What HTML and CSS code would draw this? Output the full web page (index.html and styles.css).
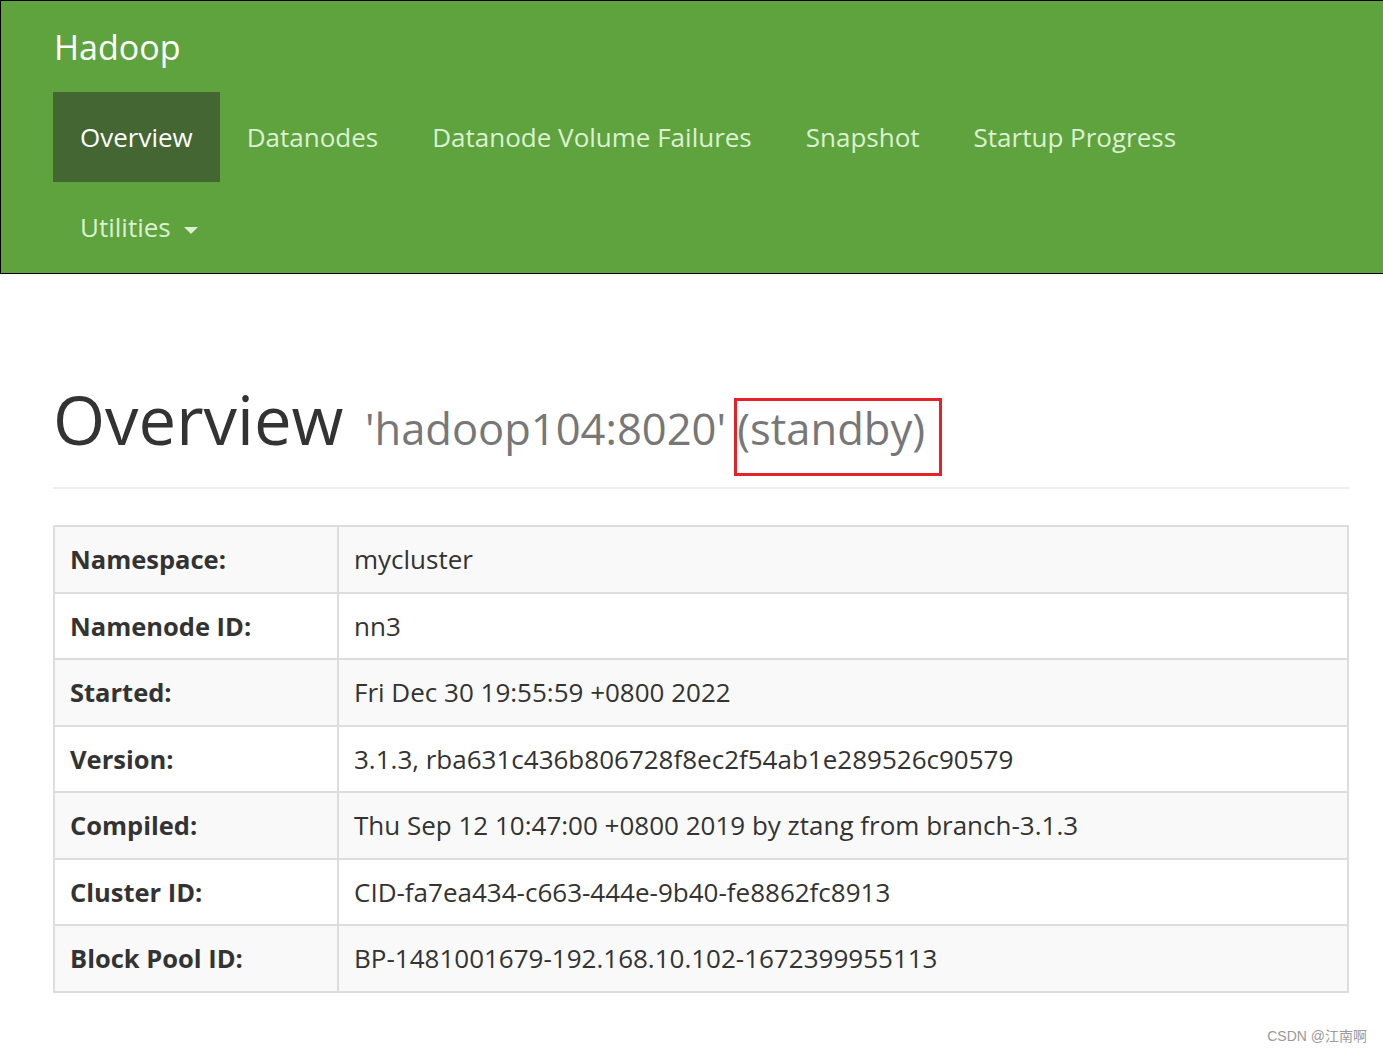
FILE: index.html
```html
<!DOCTYPE html>
<html>
<head>
<meta charset="utf-8">
<title>Namenode information</title>
<link rel="stylesheet" href="styles.css">
</head>
<body>
<header class="navbar">
  <div class="container">
    <div class="brand">Hadoop</div>
    <ul class="nav">
      <li class="active"><a>Overview</a></li>
      <li><a>Datanodes</a></li>
      <li><a>Datanode Volume Failures</a></li>
      <li><a>Snapshot</a></li>
      <li><a>Startup Progress</a></li>
      <li><a>Utilities <span class="caret"></span></a></li>
    </ul>
  </div>
</header>
<main class="container">
  <div class="page-header">
    <h1>Overview <small>'hadoop104:8020' <span class="marked">(standby)</span></small></h1>
  </div>
  <table class="info">
    <tr><th>Namespace:</th><td>mycluster</td></tr>
    <tr><th>Namenode ID:</th><td>nn3</td></tr>
    <tr><th>Started:</th><td>Fri Dec 30 19:55:59 +0800 2022</td></tr>
    <tr><th>Version:</th><td>3.1.3, rba631c436b806728f8ec2f54ab1e289526c90579</td></tr>
    <tr><th>Compiled:</th><td>Thu Sep 12 10:47:00 +0800 2019 by ztang from branch-3.1.3</td></tr>
    <tr><th>Cluster ID:</th><td>CID-fa7ea434-c663-444e-9b40-fe8862fc8913</td></tr>
    <tr><th>Block Pool ID:</th><td>BP-1481001679-192.168.10.102-1672399955113</td></tr>
  </table>
</main>
<div class="watermark">CSDN @江南啊</div>
</body>
</html>
```
FILE: styles.css
```css
html, body {
  margin: 0;
  padding: 0;
  background: #fff;
}
body {
  font-family: "Open Sans", "Noto Sans CJK SC", sans-serif;
  color: #333;
  font-size: 25px;
  position: relative;
  min-height: 1053px;
}
.container {
  padding-left: 53px;
  width: 1296px;
}
.navbar {
  background: #5fa33e;
  border-top: 1px solid #000;
  border-left: 1px solid #000;
  border-bottom: 1px solid #000;
  height: 272px;
}
.navbar .container {
  padding-left: 52px;
}
.brand {
  height: 91px;
  box-sizing: border-box;
  padding: 28px 0 0 1px;
  font-size: 34px;
  line-height: 36px;
  color: #fff;
}
.nav {
  list-style: none;
  margin: 0;
  padding: 0;
  display: flex;
  flex-wrap: wrap;
  width: 1180px;
}
.nav li a {
  display: block;
  height: 90px;
  box-sizing: border-box;
  padding: 27px 27px;
  font-size: 26px;
  line-height: 36px;
  color: #dcf0d2;
}
.nav li.active a {
  background: #436633;
  color: #fff;
}
.caret {
  display: inline-block;
  width: 0;
  height: 0;
  border-left: 7px solid transparent;
  border-right: 7px solid transparent;
  border-top: 7px solid #dcf0d2;
  vertical-align: middle;
  margin-left: 6px;
}
.page-header {
  margin-top: 109px;
  padding-bottom: 22px;
  border-bottom: 2px solid #eee;
  margin-bottom: 36px;
}
h1 {
  margin: 0;
  font-weight: 400;
  font-size: 67px;
  line-height: 72px;
  color: #333;
}
h1 small {
  font-size: 43.5px;
  color: #777;
  margin-left: 4px;
}
.marked {
  position: relative;
}
.marked::after {
  content: "";
  position: absolute;
  left: -3px;
  right: -17px;
  top: -1px;
  bottom: -18px;
  border: 3px solid #e8202a;
}
.info {
  width: 1296px;
  border-collapse: collapse;
  border: 2px solid #ddd;
}
.info th, .info td {
  border: 2px solid #ddd;
  height: 66.5px;
  box-sizing: border-box;
  padding: 0 15px;
  text-align: left;
  vertical-align: middle;
  font-size: 26px;
}
.info th {
  width: 284px;
  font-weight: 700;
  font-size: 25.5px;
}
.info tr:nth-child(odd) {
  background: #f9f9f9;
}
.watermark {
  position: absolute;
  right: 16px;
  bottom: 8px;
  font-family: "Liberation Sans", "Noto Sans CJK SC", sans-serif;
  font-size: 14px;
  color: #999;
}
```
